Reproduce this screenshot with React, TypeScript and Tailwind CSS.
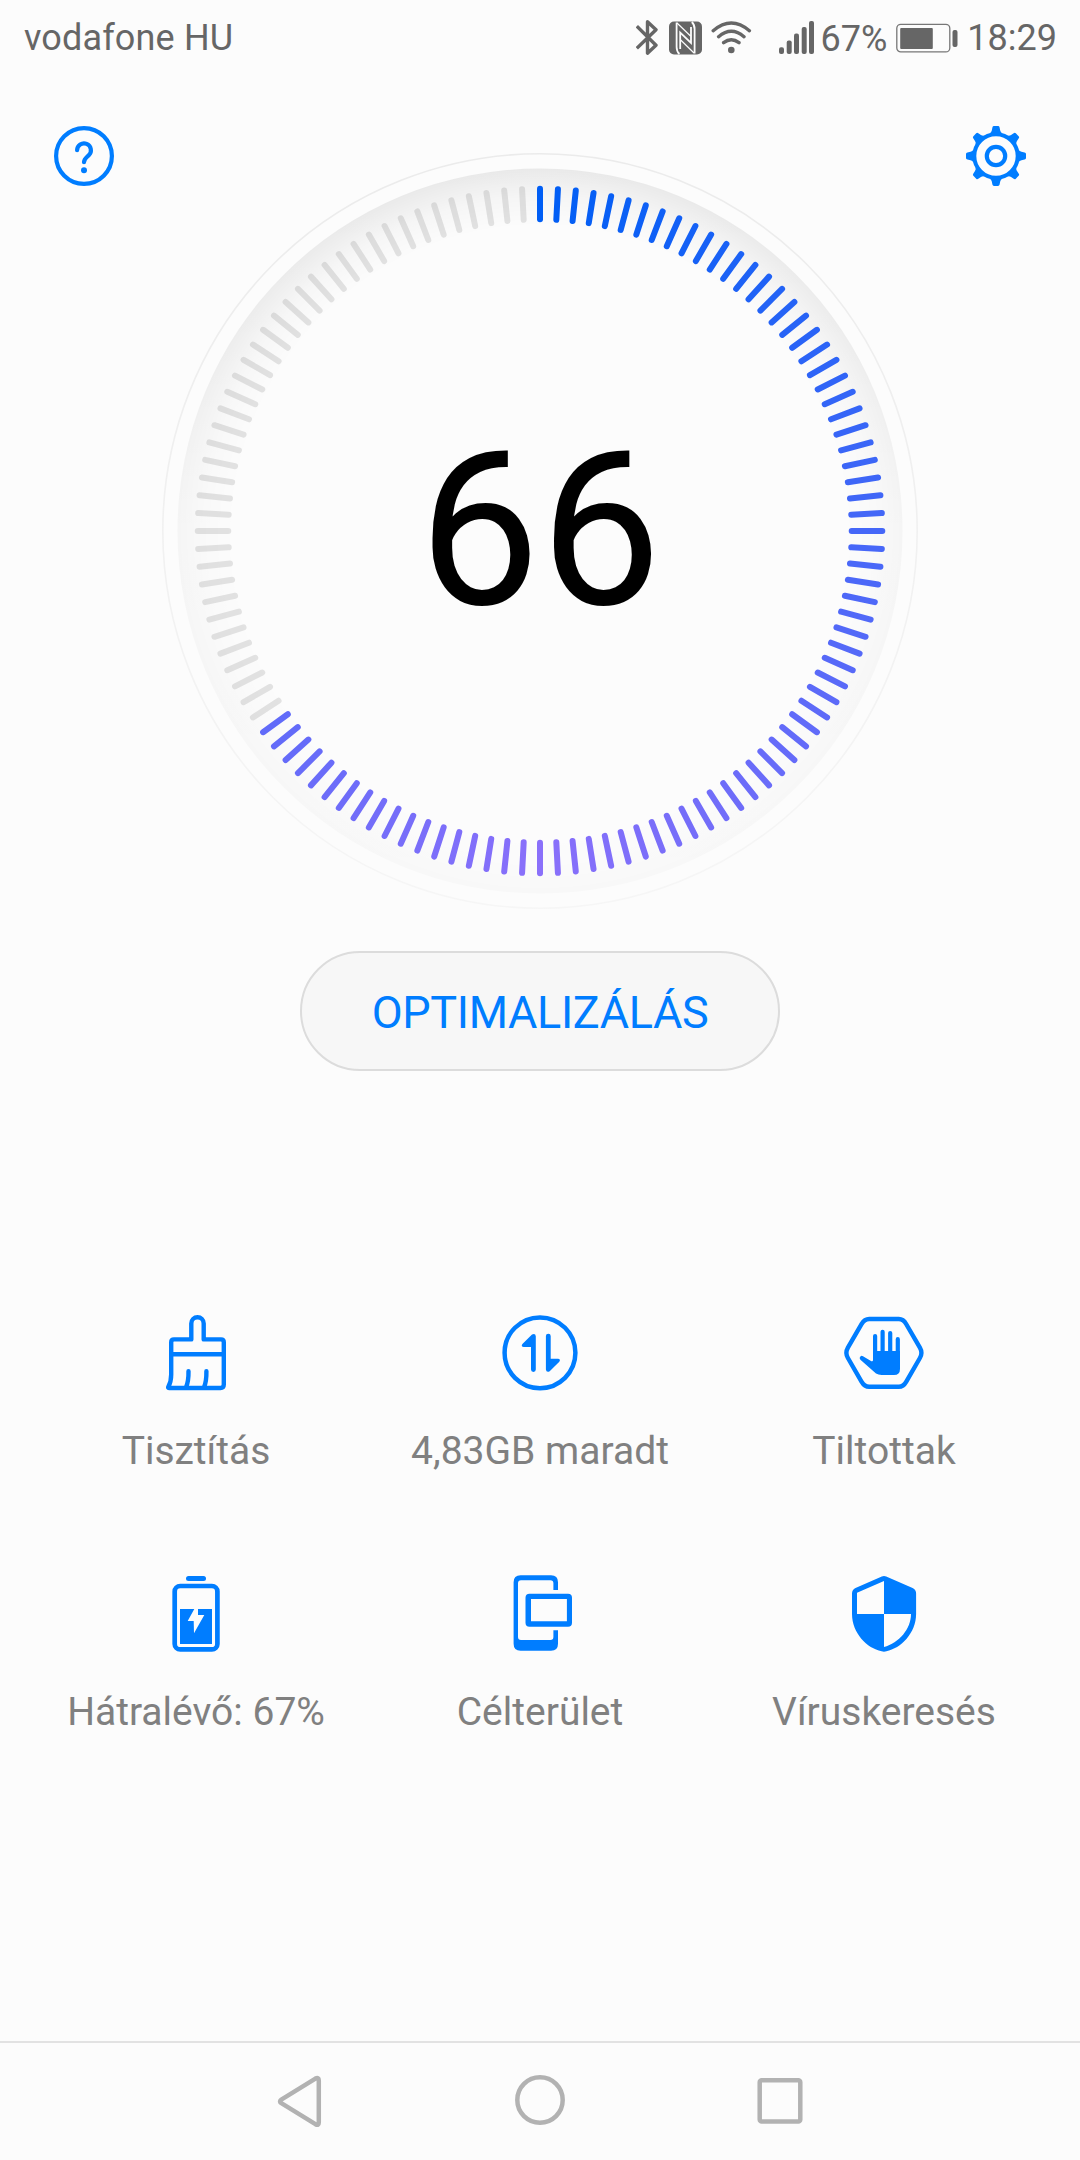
import React from "react";

const BLUE = "#007dff";
const TICK_COUNT = 120;
const SCORE = 66;
const ACTIVE_TICKS = Math.floor((TICK_COUNT * SCORE) / 100);

function StatusBar() {
  return (
    <div className="flex h-[76px] shrink-0 items-center justify-between pl-6 pr-[23px] text-[36px] leading-[42px] text-[#666666]">
      <span className="tracking-[0.15px]">vodafone HU</span>
      <div className="flex items-center">
        {/* bluetooth */}
        <svg className="mr-[11px] h-[36px] w-[22px]" viewBox="0 0 22 36" fill="none" stroke="#666" strokeWidth="3.4" strokeLinejoin="round">
          <path d="M0.8 6.2 20 25.3 11.5 33.2V1.8L20 9.7 0.8 28.3" />
        </svg>
        {/* nfc */}
        <svg className="mr-[9px] h-[36px] w-[33px]" viewBox="0 0 33 36">
          <rect y="1.5" width="33" height="33" rx="5" fill="#666" />
          <g fill="none" stroke="#fcfcfc" strokeWidth="1.8">
            <path d="M7.6 2.5V27q0 4.5 2.8 7" />
            <path d="M25.6 33.5V9q0-4.5-2.8-7" />
            <path d="M11.2 29V12.6L22 22.8V7" />
            <path d="M8 3 21.5 16M11.7 20 25 33" strokeWidth="1.2" />
          </g>
        </svg>
        {/* wifi */}
        <svg className="mr-[27px] h-[36px] w-[41px]" viewBox="0 0 41 36" fill="none" stroke="#666" strokeWidth="3.4" strokeLinecap="round">
          <path d="M2.2 10.7Q20.3-4.7 38.4 10.7M7.6 16.7Q20.3 6 33 16.7M12.6 22.7Q20.3 16.6 28 22.7" />
          <circle cx="20.3" cy="30" r="3.3" fill="#666" stroke="none" />
        </svg>
        {/* signal */}
        <svg className="mr-[6px] h-[36px] w-[36px]" viewBox="0 0 36 36" fill="#666">
          <rect x="0" y="27.3" width="5" height="6.7" rx="2" />
          <rect x="7.7" y="20.6" width="5" height="13.4" rx="2" />
          <rect x="15" y="13.6" width="5" height="20.4" rx="2" />
          <rect x="22.7" y="7" width="5" height="27" rx="2" />
          <rect x="30" y="1" width="5" height="33" rx="2" />
        </svg>
        <span className="pt-px">67%</span>
        <svg className="ml-[9px] mr-[9px] h-[36px] w-[62px]" viewBox="0 0 62 36">
          <rect x="0.8" y="4.3" width="53" height="27.6" rx="4" fill="none" stroke="#777" strokeWidth="1.3" />
          <rect x="4.2" y="8" width="32.6" height="21" rx="1" fill="#666" />
          <rect x="56.5" y="10" width="5" height="17" rx="2" fill="#666" />
        </svg>
        <span>18:29</span>
      </div>
    </div>
  );
}

function HelpIcon() {
  return (
    <svg className="h-[60px] w-[60px]" viewBox="0 0 60 60" fill="none" stroke={BLUE} strokeWidth="4.2" strokeLinecap="round">
      <circle cx="30" cy="30" r="27.9" />
      <path d="M23.1 24.2a6.9 6.9 0 1 1 11.8 4.9C32 31.8 30 33 30 36.2" />
      <circle cx="30" cy="44.3" r="3" fill={BLUE} stroke="none" />
    </svg>
  );
}

function GearIcon() {
  return (
    <svg className="h-[60px] w-[60px]" viewBox="-30 -30 60 60">
      {[0, 45, 90, 135, 180, 225, 270, 315].map((deg) => (
        <path
          key={deg}
          transform={`rotate(${deg})`}
          fill={BLUE}
          d="M-6.5-22.5Q-4.6-23.4-4.2-25.5L-3.6-28.6Q-3.3-30-2-30H2Q3.3-30 3.6-28.6L4.2-25.5Q4.6-23.4 6.5-22.5Z"
        />
      ))}
      <circle r="21.7" fill="none" stroke={BLUE} strokeWidth="4" />
      <circle r="9.2" fill="none" stroke={BLUE} strokeWidth="4.2" />
    </svg>
  );
}

function mix(from: number, to: number, t: number) {
  return Math.round(from + (to - from) * t);
}

function ScoreDial() {
  const ticks = Array.from({ length: TICK_COUNT }, (_, i) => {
    // colour runs from blue at the top to violet at the bottom, on both sides
    const t = 1 - Math.abs(1 - (2 * i) / TICK_COUNT);
    const active = i < ACTIVE_TICKS;
    return {
      deg: (i * 360) / TICK_COUNT,
      color: active ? `rgb(${mix(0, 138, t)},${mix(94, 112, t)},${mix(245, 250, t)})` : "rgba(0,0,0,0.1)",
    };
  });

  return (
    <div className="mt-[27px] grid h-[756px] w-[756px] place-items-center">
      <svg className="col-start-1 row-start-1 h-[756px] w-[756px]" viewBox="-378 -378 756 756">
        <defs>
          <radialGradient id="rim" gradientUnits="userSpaceOnUse" cx="0" cy="0" r="362.5">
            <stop offset="0.84" stopColor="#000" stopOpacity="0" />
            <stop offset="0.92" stopColor="#000" stopOpacity="0.35" />
            <stop offset="1" stopColor="#000" stopOpacity="1" />
          </radialGradient>
          <linearGradient id="fade" x1="0" y1="0" x2="0" y2="1">
            <stop offset="0" stopColor="#fff" stopOpacity="0.075" />
            <stop offset="0.25" stopColor="#fff" stopOpacity="0.06" />
            <stop offset="0.5" stopColor="#fff" stopOpacity="0.028" />
            <stop offset="1" stopColor="#fff" stopOpacity="0.016" />
          </linearGradient>
          <mask id="shade" maskUnits="userSpaceOnUse" x="-378" y="-378" width="756" height="756">
            <rect x="-378" y="-378" width="756" height="756" fill="url(#fade)" />
          </mask>
          <linearGradient id="ring" x1="0" y1="0" x2="0" y2="1">
            <stop offset="0" stopColor="#ebebeb" />
            <stop offset="1" stopColor="#f6f6f6" />
          </linearGradient>
        </defs>
        <circle r="377.2" fill="none" stroke="url(#ring)" strokeWidth="1.6" />
        <circle r="362.5" fill="url(#rim)" mask="url(#shade)" />
        {ticks.map((tick) => (
          <line
            key={tick.deg}
            y1="-342.3"
            y2="-311.7"
            stroke={tick.color}
            strokeWidth="6"
            strokeLinecap="round"
            transform={`rotate(${tick.deg})`}
          />
        ))}
      </svg>
      <span className="col-start-1 row-start-1 text-[216px] leading-[252px] text-black">{SCORE}</span>
    </div>
  );
}

function BrushIcon() {
  return (
    <g fill="none" stroke={BLUE} strokeWidth="4.4" strokeLinecap="round" strokeLinejoin="round">
      <path d="M40.3 31.4V15.4a6.2 6.2 0 0 1 12.4 0v16H70q2.8 0 2.8 2.8v42.4q0 3.4-3.4 3.4H18q-1.4 0-.6-1.4 2.8-5 2.8-12.1V34.2q0-2.8 2.8-2.8Z" />
      <path d="M20.2 46.3H72.8M37.5 63.2Q37.7 73 35 79.5M55.4 63.2Q55.6 73 53 79.5" />
    </g>
  );
}

function DataIcon() {
  const arrow = "M40.8 28.2V61.6a2.4 2.4 0 0 1-4.8 0V39H28.8q-3.2-.4-1.4-3L37 26.4q3.4-1.6 3.8 1.8Z";
  return (
    <g fill={BLUE}>
      <circle cx="45" cy="44.8" r="35.4" fill="none" stroke={BLUE} strokeWidth="4.5" />
      <path d={arrow} />
      <path d={arrow} transform="rotate(180 45.85 44.85)" />
    </g>
  );
}

function BlockedIcon() {
  return (
    <g fill="none" stroke={BLUE} strokeWidth="4.4" strokeLinecap="round">
      <path d="M8.9 39.6 22.5 16.2Q25.5 11 30.2 11H59.8Q64.4 11 67.3 16.2L80.9 39.6Q83.9 44.8 80.9 50L67.3 73.6Q64.4 78.8 59.8 78.8H30.2Q25.5 78.8 22.5 73.6L8.9 50Q5.9 44.8 8.9 39.6Z" />
      <path strokeWidth="4.2" d="M36.1 28V50M43.6 23.8V50M51.2 25V50M58.8 31.2V50" />
      <path fill={BLUE} stroke="none" d="M34 43H61V61Q61 67 55 67H42.5Q39.3 67 37 65.6L21.4 51.8Q19.8 49.6 21.4 48.4 22.6 47.4 24 48.2L32.4 53.2Q34 53.8 34 52Z" />
    </g>
  );
}

function BatteryIcon() {
  return (
    <g fill={BLUE}>
      <rect x="35" y="7" width="20" height="5" rx="2.5" />
      <rect x="23.7" y="17" width="42.7" height="63.4" rx="5.5" fill="none" stroke={BLUE} strokeWidth="4.7" />
      <path d="M29 40H43.3L36.7 52H42.7L43 64.3 53.3 46H47V40H61V75H29Z" />
    </g>
  );
}

function FloatingIcon() {
  return (
    <g fill={BLUE}>
      <path d="M25.6 6.3H56Q63 6.3 63 13.3V21H58.4V14.3Q58.4 11.3 55.4 11.3H26Q23 11.3 23 14.3V68Q23 71 26 71H55.4Q58.4 71 58.4 68V61.3H63V74.7Q63 81.7 56 81.7H25.6Q18.6 81.7 18.6 74.7V13.3Q18.6 6.3 25.6 6.3Z" />
      <path fillRule="evenodd" d="M34.5 24.7H73Q77 24.7 77 28.7V53.7Q77 57.7 73 57.7H34.5Q30.5 57.7 30.5 53.7V28.7Q30.5 24.7 34.5 24.7ZM36 30V52.2H71.9V30Z" />
    </g>
  );
}

function ShieldIcon() {
  return (
    <path
      fill={BLUE}
      fillRule="evenodd"
      d="M42.8 7.6Q45 6.4 47.2 7.6L73.6 19Q77.1 20.8 77.1 24.6V45C77.1 64 62 79.3 47.4 82.3Q45 83 42.6 82.3C28 79.3 13 64 13 45V24.6Q13 20.8 16.5 19ZM45 12 18 23.7V45H45ZM45 45V78C60 74 72 60 72 45Z"
    />
  );
}

const FEATURES = [
  { label: "Tisztítás", Icon: BrushIcon },
  { label: "4,83GB maradt", Icon: DataIcon },
  { label: "Tiltottak", Icon: BlockedIcon },
  { label: "Hátralévő: 67%", Icon: BatteryIcon },
  { label: "Célterület", Icon: FloatingIcon },
  { label: "Víruskeresés", Icon: ShieldIcon },
];

function NavBar() {
  return (
    <div className="mt-auto flex h-[119px] shrink-0 items-start justify-center gap-[180px] border-t-2 border-[#e2e2e2] pt-[27px]">
      <svg className="h-[60px] w-[60px]" viewBox="0 0 60 60" fill="none" stroke="#b2b2b2" strokeWidth="4.5" strokeLinejoin="round">
        <path d="M45.4 8.6Q48.8 6.8 48.8 10.4V52.4Q48.8 56 45.4 54.2L11.3 33.2Q8.8 31.4 11.3 29.6Z" />
      </svg>
      <svg className="h-[60px] w-[60px]" viewBox="0 0 60 60" fill="none" stroke="#b2b2b2" strokeWidth="4.5">
        <circle cx="30" cy="30" r="22.7" />
      </svg>
      <svg className="h-[60px] w-[60px]" viewBox="0 0 60 60" fill="none" stroke="#b2b2b2" strokeWidth="4.5">
        <rect x="9.7" y="10.3" width="40.6" height="41.1" rx="2" />
      </svg>
    </div>
  );
}

export default function App() {
  return (
    <div className="flex h-[2160px] w-[1080px] flex-col overflow-hidden bg-[#fcfcfc] font-[Roboto,sans-serif]">
      <StatusBar />

      <div className="flex items-start justify-between px-[54px] pt-[50px]">
        <HelpIcon />
        <ScoreDial />
        <GearIcon />
      </div>

      <button
        type="button"
        className="mx-auto mt-[42px] flex h-[120px] w-[480px] shrink-0 items-center justify-center rounded-full border-2 border-[#dcdcdc] bg-[#f7f7f7] pt-[3px] text-[45px] leading-[54px] tracking-[-0.35px] text-[#007dff]"
      >
        OPTIMALIZÁLÁS
      </button>

      {/* feature shortcuts */}
      <div className="mt-[237px] grid grid-cols-3 gap-y-24 px-6">
        {FEATURES.map(({ label, Icon }) => (
          <div key={label} className="flex h-[165px] flex-col items-center">
            <svg className="h-[90px] w-[90px] shrink-0" viewBox="0 0 90 90">
              <Icon />
            </svg>
            <span className="mt-[30px] whitespace-nowrap text-[39px] leading-[46px] text-[#808080]">{label}</span>
          </div>
        ))}
      </div>

      <NavBar />
    </div>
  );
}
